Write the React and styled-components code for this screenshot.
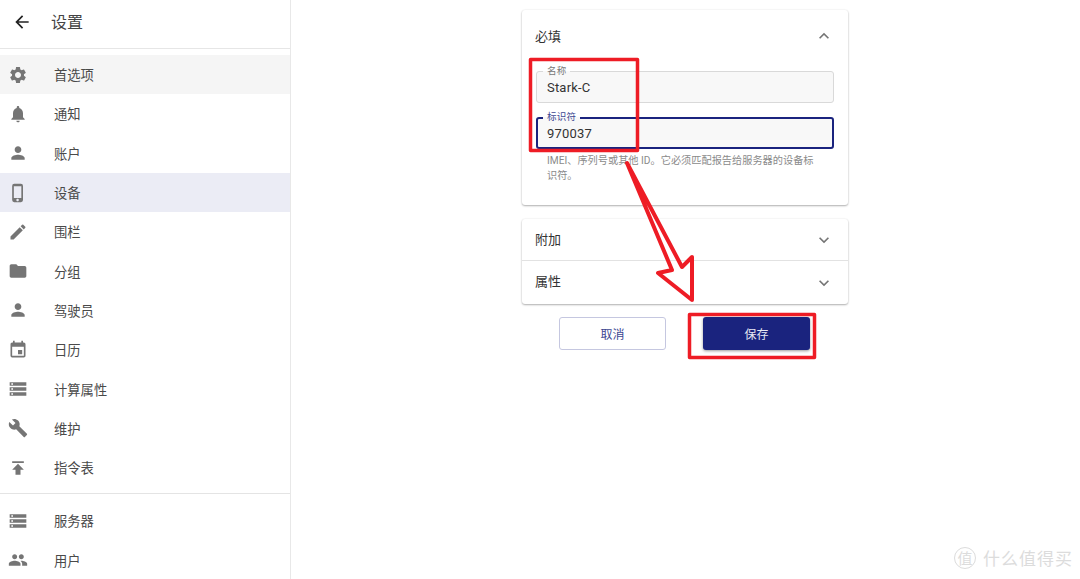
import React from "react";
import styled, { createGlobalStyle } from "styled-components";
import {
  MdArrowBack,
  MdSettings,
  MdNotifications,
  MdPerson,
  MdPhoneIphone,
  MdCreate,
  MdFolder,
  MdEvent,
  MdStorage,
  MdBuild,
  MdPublish,
  MdPeople,
  MdExpandLess,
  MdExpandMore,
} from "react-icons/md";

const GlobalStyle = createGlobalStyle`
  html, body { margin: 0; padding: 0; background: #fff; overflow: hidden; }
  body { font-family: Roboto, "Noto Sans CJK SC", sans-serif; }
  * { box-sizing: border-box; }
`;

const Page = styled.div`
  position: relative;
  display: flex;
  width: 1080px;
  height: 579px;
  overflow: hidden;
`;

const Sidebar = styled.aside`
  width: 291px;
  flex-shrink: 0;
  border-right: 1px solid #e8e8e8;
  display: flex;
  flex-direction: column;
`;

const TopBar = styled.div`
  height: 49px;
  flex-shrink: 0;
  display: flex;
  align-items: center;
  padding: 0 0 4px 12px;
  gap: 19px;
  border-bottom: 1px solid #e6e6e6;
  color: #222;
`;

const Title = styled.div`
  font-size: 16px;
  color: #444;
  margin-top: -2px;
`;

const NavList = styled.div`
  flex-shrink: 0;
  padding-top: 6px;
  display: flex;
  flex-direction: column;
`;

const NavItem = styled.div`
  height: 39.3px;
  flex-shrink: 0;
  display: flex;
  align-items: center;
  padding-left: 8px;
  gap: 26px;
  font-size: 13.3px;
  color: #4a4a4a;
  background: ${(p) => (p.$state === "hover" ? "#f5f5f5" : p.$state === "active" ? "#ebecf5" : "transparent")};
`;

const NavIcon = styled.span`
  width: 20px;
  height: 20px;
  display: flex;
  align-items: center;
  justify-content: center;
  color: #757575;
  font-size: 20px;
`;

const Divider = styled.div`
  height: 1px;
  flex-shrink: 0;
  background: #e4e4e4;
  margin: 6px 0 7px;
`;

const Main = styled.main`
  flex: 1;
  display: flex;
  justify-content: center;
  padding: 10px 1px 0 0;
`;

const Column = styled.div`
  width: 326px;
  display: flex;
  flex-direction: column;
`;

const Card = styled.section`
  background: #fff;
  border-radius: 3px;
  margin-bottom: ${(p) => p.$gap || 0}px;
  box-shadow: 0 1px 2px rgba(0, 0, 0, 0.3), 0 0 2px rgba(0, 0, 0, 0.08);
`;

const CardHead = styled.div`
  height: ${(p) => p.$h}px;
  display: flex;
  align-items: center;
  justify-content: space-between;
  padding: 0 14px 0 13px;
  font-size: 13px;
  color: #333;
  border-top: ${(p) => (p.$line ? "1px solid #e2e2e2" : "none")};
  svg {
    color: #757575;
    font-size: 20px;
  }
`;

const CardTitle = styled.span`
  margin-top: ${(p) => (p.$lift ? -4 : -2)}px;
`;

const CardBody = styled.div`
  padding: 9px 14px 22px;
  display: flex;
  flex-direction: column;
  gap: 14px;
`;

const Field = styled.div`
  position: relative;
  height: 32px;
  border-radius: 3px;
  background: #f8f8f8;
  border: ${(p) => (p.$focus ? "2px solid #1a237e" : "1px solid #d9d9d9")};
  display: flex;
  align-items: center;
  padding: 0 ${(p) => (p.$focus ? 9 : 10)}px;
  font-size: 13px;
  letter-spacing: 0.2px;
  color: #333;
`;

const FieldLabel = styled.span`
  position: absolute;
  left: ${(p) => (p.$focus ? 5 : 6)}px;
  top: ${(p) => (p.$focus ? -8 : -7)}px;
  padding: 0 4px;
  font-size: 9.5px;
  line-height: 12px;
  color: ${(p) => (p.$focus ? "#3d4691" : "#777")};
  background: linear-gradient(#fff 50%, #f8f8f8 50%);
`;

const Helper = styled.div`
  margin: -10px 11px 0;
  font-size: 10.2px;
  line-height: 15px;
  color: #8a8a8a;
`;

const Actions = styled.div`
  display: flex;
  justify-content: center;
  gap: 37px;
  margin: 13px 1px 0 0;
`;

const Button = styled.div`
  width: 107px;
  height: 33px;
  border-radius: 3px;
  display: flex;
  align-items: center;
  justify-content: center;
  font-size: 12px;
  color: ${(p) => (p.$primary ? "#e8e9f4" : "#3d4691")};
  background: ${(p) => (p.$primary ? "#1a237e" : "#fff")};
  border: ${(p) => (p.$primary ? "none" : "1px solid #c5c7e0")};
  box-shadow: ${(p) => (p.$primary ? "0 1px 3px rgba(0,0,0,0.4)" : "none")};
`;

const Markup = styled.svg`
  position: absolute;
  left: 0;
  top: 0;
  pointer-events: none;
`;

const Watermark = styled.div`
  position: absolute;
  right: 7px;
  bottom: 9px;
  display: flex;
  align-items: center;
  gap: 7px;
  font-size: 17px;
  letter-spacing: 1px;
  color: #dcdcdc;
`;

const WatermarkBadge = styled.span`
  width: 22px;
  height: 22px;
  border: 1.5px solid #dcdcdc;
  border-radius: 50%;
  display: flex;
  align-items: center;
  justify-content: center;
  font-size: 15px;
  letter-spacing: 0;
`;

const mainItems = [
  ["首选项", MdSettings, "hover"],
  ["通知", MdNotifications],
  ["账户", MdPerson],
  ["设备", MdPhoneIphone, "active"],
  ["围栏", MdCreate],
  ["分组", MdFolder],
  ["驾驶员", MdPerson],
  ["日历", MdEvent],
  ["计算属性", MdStorage],
  ["维护", MdBuild],
  ["指令表", MdPublish],
];

const adminItems = [
  ["服务器", MdStorage],
  ["用户", MdPeople],
];

function renderItem([label, Icon, state]) {
  return (
    <NavItem key={label} $state={state}>
      <NavIcon>
        <Icon />
      </NavIcon>
      {label}
    </NavItem>
  );
}

export default function App() {
  return (
    <Page>
      <GlobalStyle />
      <Sidebar>
        <TopBar>
          <MdArrowBack size={20} />
          <Title>设置</Title>
        </TopBar>
        <NavList>
          {mainItems.map(renderItem)}
          <Divider />
          {adminItems.map(renderItem)}
        </NavList>
      </Sidebar>
      <Main>
        <Column>
          <Card $gap={14}>
            <CardHead $h={52}>
              <CardTitle>必填</CardTitle>
              <MdExpandLess />
            </CardHead>
            <CardBody>
              <Field>
                <FieldLabel>名称</FieldLabel>
                Stark-C
              </Field>
              <Field $focus>
                <FieldLabel $focus>标识符</FieldLabel>
                970037
              </Field>
              <Helper>IMEI、序列号或其他 ID。它必须匹配报告给服务器的设备标识符。</Helper>
            </CardBody>
          </Card>
          <Card>
            <CardHead $h={41}>
              <CardTitle>附加</CardTitle>
              <MdExpandMore />
            </CardHead>
            <CardHead $h={44} $line>
              <CardTitle $lift>属性</CardTitle>
              <MdExpandMore />
            </CardHead>
          </Card>
          <Actions>
            <Button>取消</Button>
            <Button $primary>保存</Button>
          </Actions>
        </Column>
      </Main>
      <Watermark>
        <WatermarkBadge>值</WatermarkBadge>
        什么值得买
      </Watermark>
      <Markup width="1080" height="579" fill="none" stroke="#ee1c25" strokeWidth="3.5" strokeLinejoin="round">
        <rect x="530.5" y="59.5" width="107" height="91" />
        <rect x="689.5" y="314.5" width="125" height="43" />
        <path d="M627 163 L682 267 L692 257 L692 300 L658 273 L672 270 Z" strokeWidth="4" />
      </Markup>
    </Page>
  );
}
